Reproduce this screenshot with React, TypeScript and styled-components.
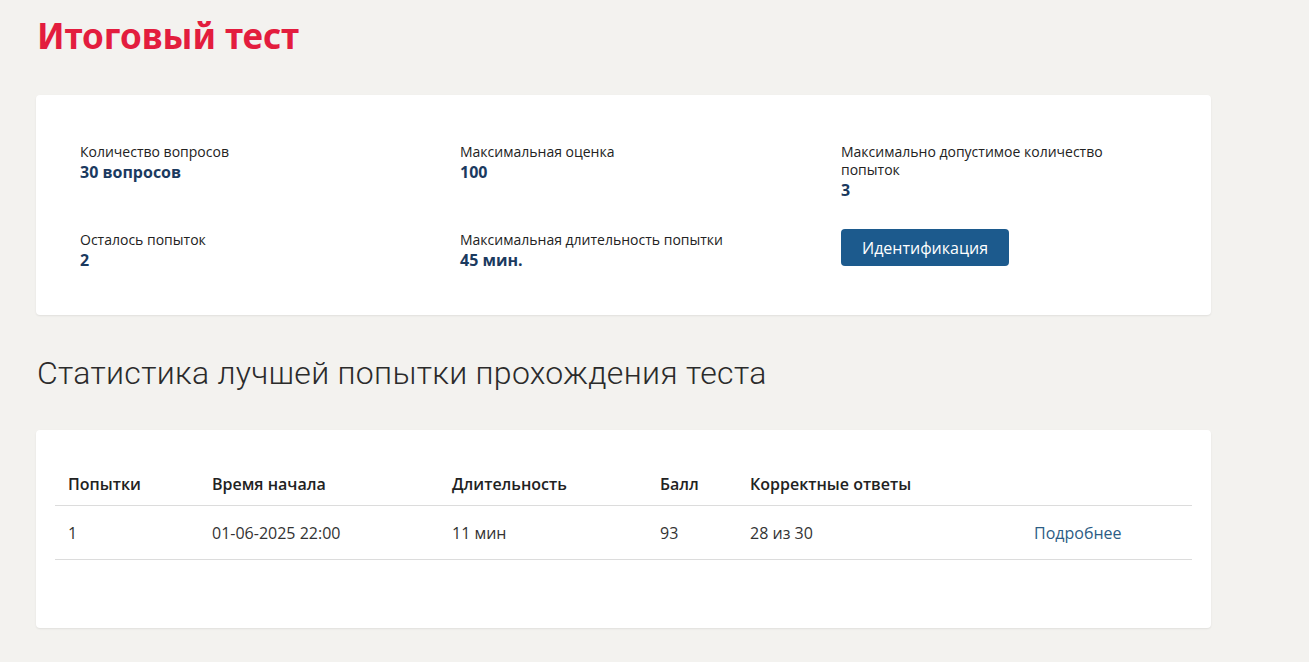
import { FC } from 'react';
import styled, { createGlobalStyle } from 'styled-components';

const GlobalStyle = createGlobalStyle`
  body {
    margin: 0;
    background: #f3f2ef;
    font-family: 'Open Sans', 'Noto Sans', sans-serif;
    color: #222;
  }
`;

const Page = styled.div`
  padding: 14px 98px 34px 36px;
`;

const PageTitle = styled.h1`
  margin: 0 0 37px 1px;
  font-family: 'Noto Sans', sans-serif;
  font-size: 35px;
  font-weight: 700;
  line-height: 44px;
  color: #e31d3e;
`;

const Card = styled.div<{ $pad: string }>`
  background: #fff;
  border-radius: 4px;
  box-shadow: 0 1px 2px rgba(0, 0, 0, 0.08);
  padding: ${(p) => p.$pad};
`;

const InfoGrid = styled.div`
  display: grid;
  grid-template-columns: 380px 381px 300px;
  row-gap: 30px;
`;

const InfoItem = styled.div``;

const Label = styled.div`
  font-size: 14px;
  line-height: 18px;
  color: #222;
`;

const Value = styled.div`
  font-size: 16px;
  font-weight: 700;
  line-height: 22px;
  color: #1b3a5f;
`;

const Button = styled.button`
  margin-top: -2px;
  height: 37px;
  padding: 0 21px;
  border: none;
  border-radius: 4px;
  background: #1c5a8d;
  color: #fff;
  font-family: 'Open Sans', sans-serif;
  font-size: 16px;
`;

const SectionTitle = styled.h2`
  margin: 37px 0 36px 1px;
  font-family: 'Roboto', sans-serif;
  font-size: 32px;
  font-weight: 300;
  line-height: 42px;
  color: #2b2b2b;
  letter-spacing: 0.3px;
`;

const Table = styled.table`
  width: 100%;
  border-collapse: collapse;
  table-layout: fixed;
`;

const Th = styled.th<{ $w?: number }>`
  width: ${(p) => (p.$w ? `${p.$w - 26}px` : 'auto')};
  text-align: left;
  font-size: 16px;
  font-weight: 600;
  padding: 13px 13px 10px;
  border-bottom: 1px solid #dcdcdc;
  color: #222;
`;

const Td = styled.td`
  font-size: 16px;
  padding: 16px 13px 15px;
  border-bottom: 1px solid #dcdcdc;
  color: #333;
`;

const MoreLink = styled.a`
  color: #2c5c85;
  text-decoration: none;
  cursor: pointer;
`;

const info = [
  { label: 'Количество вопросов', value: '30 вопросов' },
  { label: 'Максимальная оценка', value: '100' },
  { label: 'Максимально допустимое количество попыток', value: '3' },
  { label: 'Осталось попыток', value: '2' },
  { label: 'Максимальная длительность попытки', value: '45 мин.' },
];

const App: FC = () => {
  return (
    <>
      <GlobalStyle />
      <Page>
        <PageTitle>Итоговый тест</PageTitle>
        <Card $pad='48px 44px 44px'>
          <InfoGrid>
            {info.map((item) => (
              <InfoItem key={item.label}>
                <Label>{item.label}</Label>
                <Value>{item.value}</Value>
              </InfoItem>
            ))}
            <InfoItem>
              <Button>Идентификация</Button>
            </InfoItem>
          </InfoGrid>
        </Card>
        <SectionTitle>Статистика лучшей попытки прохождения теста</SectionTitle>
        <Card $pad='30px 19px 68px'>
          <Table>
            <thead>
              <tr>
                <Th $w={144}>Попытки</Th>
                <Th $w={240}>Время начала</Th>
                <Th $w={208}>Длительность</Th>
                <Th $w={90}>Балл</Th>
                <Th $w={284}>Корректные ответы</Th>
                <Th />
              </tr>
            </thead>
            <tbody>
              <tr>
                <Td>1</Td>
                <Td>01-06-2025 22:00</Td>
                <Td>11 мин</Td>
                <Td>93</Td>
                <Td>28 из 30</Td>
                <Td>
                  <MoreLink>Подробнее</MoreLink>
                </Td>
              </tr>
            </tbody>
          </Table>
        </Card>
      </Page>
    </>
  );
};

export default App;
